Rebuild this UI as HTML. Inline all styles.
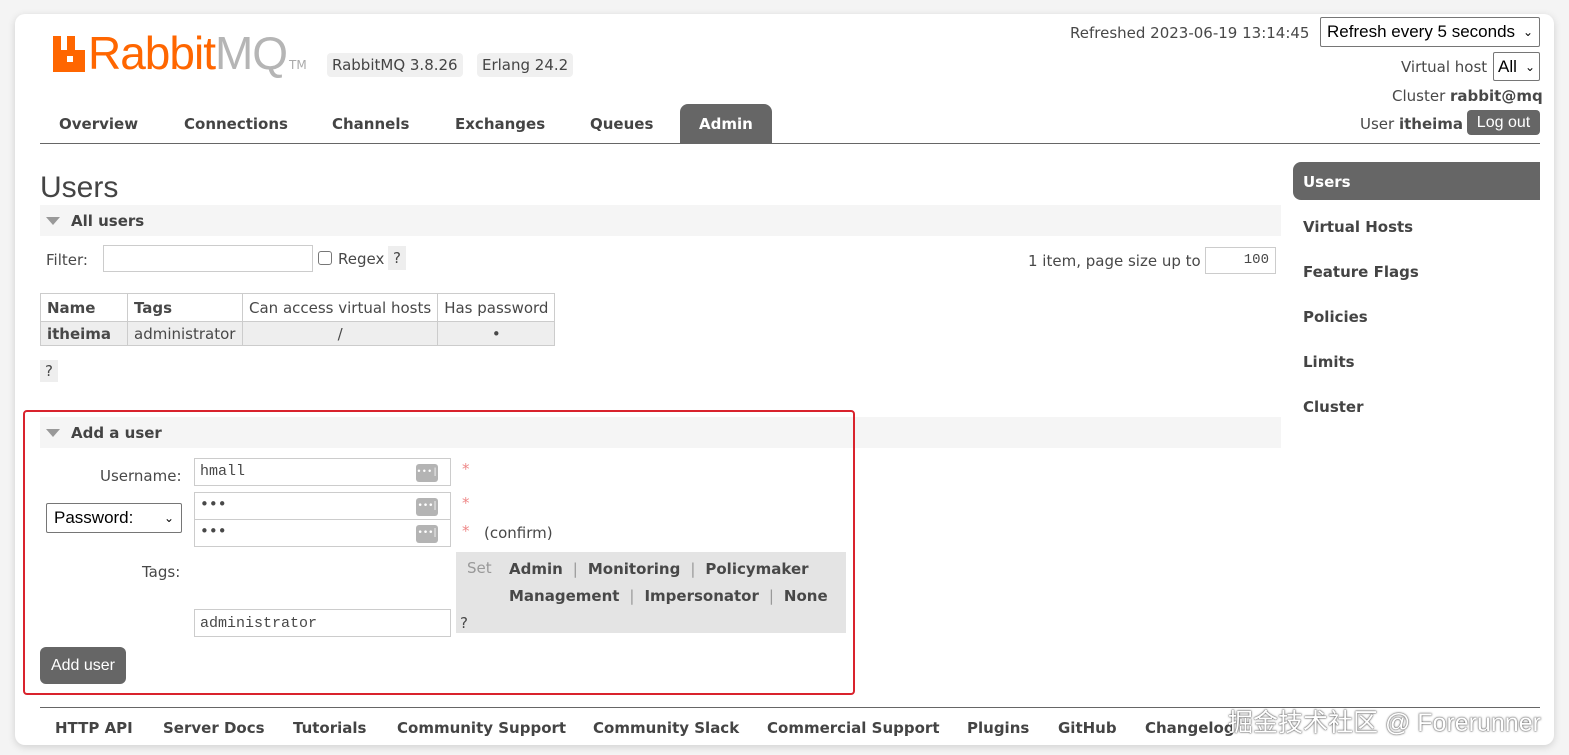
<!DOCTYPE html>
<html><head><style>
*{margin:0;padding:0;box-sizing:border-box}
body{width:1569px;height:755px;background:#f4f4f4;font-family:"DejaVu Sans","Liberation Sans",sans-serif;color:#484848;position:relative;overflow:hidden;font-size:15px}
.card{position:absolute;left:15px;top:14px;width:1539px;height:731px;background:#fff;border-radius:10px;box-shadow:0 2px 8px rgba(0,0,0,.15)}
.a{position:absolute;white-space:nowrap}
.b{font-weight:bold}
.nav{position:absolute;top:115px;font-weight:bold;font-size:15px;color:#444}
.badge{position:absolute;top:53px;height:24px;background:#f0f0f0;border-radius:4px;padding:3px 5px;font-size:15px;color:#444}
.sel{position:absolute;border:1px solid #767676;background:#fff;border-radius:2px;font-family:"Liberation Sans",sans-serif;color:#000;font-size:17px;padding:0 6px;display:flex;align-items:center;justify-content:space-between}
.inp{position:absolute;border:1px solid #ccc;background:#fff;height:28px}
.side{position:absolute;left:1303px;font-weight:bold;font-size:15px;color:#444}
.sec{position:absolute;background:#f5f5f5;height:31px}
.tri{position:absolute;width:0;height:0;border-left:7px solid transparent;border-right:7px solid transparent;border-top:8px solid #999}
.pw{position:absolute;right:12px;top:5px;width:22px;height:18px;background:#b4b4b4;border-radius:3px;color:#fff;font-size:9px;text-align:center;line-height:17px}
.ft{position:absolute;top:719px;font-weight:bold;font-size:15px;color:#444}
td{border:1px solid #ccc;padding:0 6px;height:28px}
</style></head><body>
<div class="card"></div>
<svg class="a" style="left:53px;top:36px" width="32" height="36" viewBox="0 0 32 36"><path d="M0 0h8v14h6V0h8v14h10v22H0z" fill="#f60"/><rect x="14" y="20" width="6" height="6" fill="#fff"/></svg>
<div class="a" style="left:88px;top:26px;font-family:'Liberation Sans',sans-serif;font-size:46px;color:#f60;letter-spacing:-1px">Rabbit<span style="color:#b5b5b5">MQ</span></div>
<div class="a" style="left:289px;top:58px;font-size:12px;color:#aaa">TM</div>
<div class="badge" style="left:327px">RabbitMQ 3.8.26</div>
<div class="badge" style="left:477px">Erlang 24.2</div>
<div class="nav" style="left:59px">Overview</div>
<div class="nav" style="left:184px">Connections</div>
<div class="nav" style="left:332px">Channels</div>
<div class="nav" style="left:455px">Exchanges</div>
<div class="nav" style="left:590px">Queues</div>
<div class="a" style="left:680px;top:104px;width:92px;height:40px;background:#666;border-radius:8px 8px 0 0"></div>
<div class="nav" style="left:699px;color:#fff">Admin</div>
<div class="a" style="left:40px;top:143px;width:1500px;height:1px;background:#666"></div>
<div class="a" style="left:1070px;top:24px">Refreshed 2023-06-19 13:14:45</div>
<div class="sel" style="left:1320px;top:17px;width:220px;height:30px">Refresh every 5 seconds <span style="font-size:12px">⌄</span></div>
<div class="a" style="left:1401px;top:58px">Virtual host</div>
<div class="sel" style="left:1493px;top:52px;width:47px;height:29px;padding:0 4px">All <span style="font-size:12px">⌄</span></div>
<div class="a" style="left:1392px;top:87px">Cluster <b>rabbit@mq</b></div>
<div class="a" style="left:1360px;top:115px">User <b>itheima</b></div>
<div class="a" style="left:1467px;top:110px;width:73px;height:25px;background:#666;border-radius:4px;color:#fff;text-align:center;line-height:26px;font-family:'Liberation Sans',sans-serif;font-size:16px">Log out</div>
<div class="a" style="left:1293px;top:162px;width:247px;height:38px;background:#666;border-radius:8px 0 0 8px"></div>
<div class="side" style="top:173px;color:#fff">Users</div>
<div class="side" style="top:218px">Virtual Hosts</div>
<div class="side" style="top:263px">Feature Flags</div>
<div class="side" style="top:308px">Policies</div>
<div class="side" style="top:353px">Limits</div>
<div class="side" style="top:398px">Cluster</div>
<div class="a" style="left:40px;top:171px;font-size:30px;color:#444;font-family:'Liberation Sans',sans-serif">Users</div>
<div class="sec" style="left:40px;top:205px;width:1241px"></div>
<div class="tri" style="left:46px;top:217px"></div>
<div class="a b" style="left:71px;top:212px;color:#444">All users</div>
<div class="a" style="left:46px;top:251px">Filter:</div>
<div class="inp" style="left:103px;top:245px;width:210px;height:27px"></div>
<div class="a" style="left:318px;top:251px;width:14px;height:14px;border:1px solid #777;border-radius:3px"></div>
<div class="a" style="left:338px;top:250px">Regex</div>
<div class="a" style="left:388px;top:246px;width:18px;height:24px;background:#eee;text-align:center;line-height:24px">?</div>
<div class="a" style="left:1028px;top:252px">1 item, page size up to</div>
<div class="inp" style="left:1205px;top:247px;width:71px;height:27px;font-family:'Liberation Mono',monospace;font-size:14px;text-align:right;padding:4px 6px">100</div>
<table class="a" style="left:40px;top:293px;border-collapse:collapse;font-size:15px">
<tr><td class="b" style="width:87px">Name</td><td class="b" style="width:115px">Tags</td><td style="width:194px">Can access virtual hosts</td><td style="width:116px">Has password</td></tr>
<tr style="background:#eee"><td class="b" style="height:24px">itheima</td><td style="height:24px">administrator</td><td style="text-align:center;height:24px">/</td><td style="text-align:center;height:24px">•</td></tr>
</table>
<div class="a" style="left:40px;top:360px;width:18px;height:22px;background:#eee;text-align:center;line-height:22px">?</div>
<div class="sec" style="left:40px;top:417px;width:1241px"></div>
<div class="tri" style="left:46px;top:429px"></div>
<div class="a b" style="left:71px;top:424px;color:#444">Add a user</div>
<div class="a" style="left:100px;top:467px">Username:</div>
<div class="inp" style="left:194px;top:458px;width:257px;font-family:'Liberation Mono',monospace;padding:4px 5px">hmall<div class="pw">•••|</div></div>
<div class="a" style="left:462px;top:460px;color:#e88">*</div>
<div class="sel" style="left:46px;top:503px;width:136px;height:30px;padding:0 7px">Password: <span style="font-size:12px">⌄</span></div>
<div class="inp" style="left:194px;top:492px;width:257px;padding:2px 5px;font-size:15px">•••<div class="pw">•••|</div></div>
<div class="a" style="left:462px;top:494px;color:#e88">*</div>
<div class="inp" style="left:194px;top:519px;width:257px;padding:2px 5px;font-size:15px">•••<div class="pw">•••|</div></div>
<div class="a" style="left:462px;top:522px;color:#e88">*</div>
<div class="a" style="left:484px;top:524px">(confirm)</div>
<div class="a" style="left:142px;top:563px">Tags:</div>
<div class="a" style="left:456px;top:552px;width:390px;height:81px;background:#e4e4e4"></div>
<div class="a" style="left:467px;top:559px;color:#999">Set</div>
<div class="a b" style="left:509px;top:560px">Admin <span style="font-weight:normal;color:#999">&nbsp;|&nbsp;</span> Monitoring <span style="font-weight:normal;color:#999">&nbsp;|&nbsp;</span> Policymaker</div>
<div class="a b" style="left:509px;top:587px">Management <span style="font-weight:normal;color:#999">&nbsp;|&nbsp;</span> Impersonator <span style="font-weight:normal;color:#999">&nbsp;|&nbsp;</span> None</div>
<div class="a" style="left:460px;top:614px">?</div>
<div class="inp" style="left:194px;top:609px;width:257px;font-family:'Liberation Mono',monospace;padding:5px 5px">administrator</div>
<div class="a" style="left:40px;top:647px;width:86px;height:37px;background:#666;border-radius:6px;color:#fff;text-align:center;line-height:38px;font-family:'Liberation Sans',sans-serif;font-size:16px">Add user</div>
<div class="a" style="left:23px;top:410px;width:832px;height:285px;border:2px solid #d9232d;border-radius:4px"></div>
<div class="a" style="left:40px;top:707px;width:1500px;height:1px;background:#666"></div>
<div class="ft" style="left:55px">HTTP API</div>
<div class="ft" style="left:163px">Server Docs</div>
<div class="ft" style="left:293px">Tutorials</div>
<div class="ft" style="left:397px">Community Support</div>
<div class="ft" style="left:593px">Community Slack</div>
<div class="ft" style="left:767px">Commercial Support</div>
<div class="ft" style="left:967px">Plugins</div>
<div class="ft" style="left:1058px">GitHub</div>
<div class="ft" style="left:1145px">Changelog</div>
<div class="a" style="left:1228px;top:703px;font-family:'Liberation Sans','Noto Sans CJK SC',sans-serif;font-size:25px;color:#fff;text-shadow:0 0 2px #555,0 0 1px #333">掘金技术社区 @ Forerunner</div>
</body></html>
